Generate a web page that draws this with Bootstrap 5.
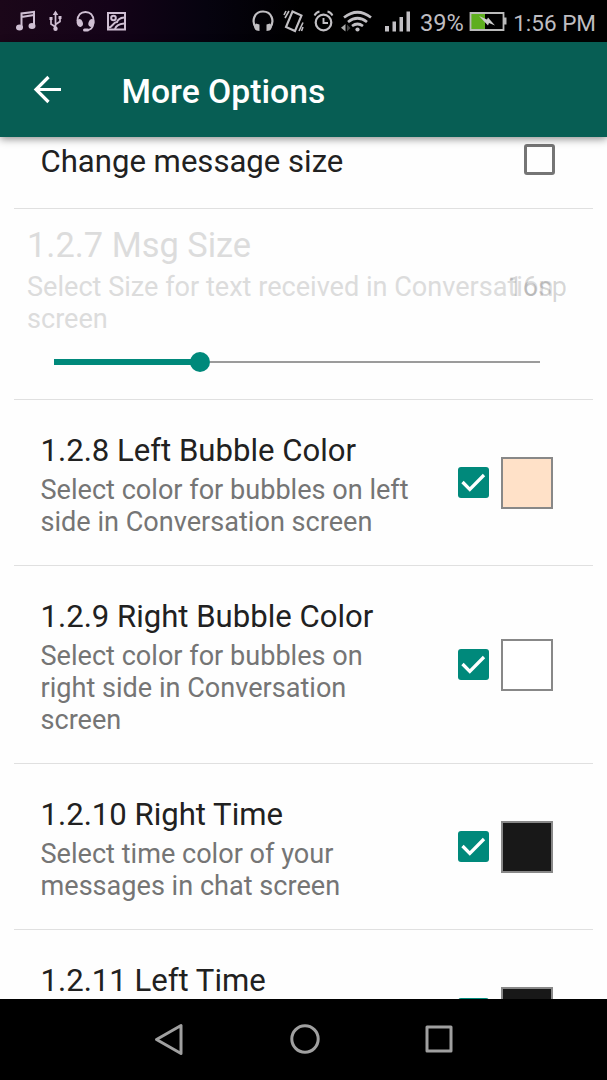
<!DOCTYPE html>
<html lang="en">
<head>
<meta charset="utf-8">
<meta name="viewport" content="width=device-width, initial-scale=1">
<title>More Options</title>
<link href="https://cdn.jsdelivr.net/npm/bootstrap@5.3.0/dist/css/bootstrap.min.css" rel="stylesheet">
<style>
  :root { --teal: #00897b; --appbar: #075e54; }
  body { font-family: Roboto, sans-serif; background: #fefefe; color: #212121; }
  .screen { height: 1080px; overflow: hidden; }
  .status-bar { height: 42px; padding: 0 11px 0 15px; color: #bfbdc1; background: linear-gradient(90deg, #1b0719 0, #140318 110px, #06030f 205px, #000 300px); }
  .status-bar svg { display: block; flex: none; }
  .status-text { line-height: 42px; padding-top: 3px; white-space: nowrap; }
  .battery-text { font-size: 23.6px; width: 48px; margin-left: 10px; }
  .clock-text { font-size: 22.5px; width: 89px; }
  .app-bar { height: 95px; background: var(--appbar); box-shadow: 0 2px 8px rgba(0,0,0,.45); z-index: 2; }
  .app-title { font-size: 33.7px; font-weight: 500; line-height: 40px; margin: 4px 0 0 58.500px; }
  .pref-list { min-height: 0; overflow: hidden; padding: 0 14px; }
  .pref-row { border-bottom: 1px solid #e0e0e0; padding: 0 40px 0 26.500px; flex: none; }
  .pref-title { font-size: 31.1px; line-height: 36px; white-space: nowrap; }
  .pref-summary { font-size: 27.1px; line-height: 32px; color: #757575; }
  .row-size { height: 72px; padding-right: 38px; padding-top: 7px; }
  .row-slider { height: 191px; padding: 16px 13px 0; }
  .row-slider .pref-title { font-size: 34.4px; line-height: 40px; }
  .row-slider .pref-title, .row-slider .pref-summary { color: #dcdcdc; }
  .row-slider .pref-summary { margin-top: 6px; white-space: nowrap; }
  .value-label { right: 26px; top: 62px; font-size: 27px; line-height: 32px; color: rgba(0,0,0,.17); }
  .slider-track { height: 20px; margin: 17px 40px 0 27px; }
  .slider-done { height: 6px; background: var(--teal); width: 30%; }
  .slider-thumb { width: 20px; height: 20px; background: var(--teal); margin-left: -10px; }
  .slider-rest { height: 2px; background: #9b9b9b; }
  .color-row { padding-top: 33px; padding-bottom: 27px; }
  .color-row .pref-summary { margin-top: 5px; }
  .controls { gap: 12px; margin-top: -6px; }
  .controls-cut { margin-top: 24px; }
  .empty-check { width: 31px; height: 31px; border: 3px solid #757575; border-radius: 3px; }
  .full-check { width: 31px; height: 31px; background: var(--teal); border-radius: 3px; }
  .swatch { width: 52px; height: 52px; border: 2px solid #888; }
  .peach { background: #ffe1c8; } .paper { background: #fff; } .ink { background: #181818; }
  .nav-keys { height: 81px; background: #000; padding: 0 154px 1px 153px; }
</style>
</head>
<body>
<main class="screen d-flex flex-column">
  <div class="status-bar d-flex align-items-center justify-content-between flex-shrink-0">
    <div class="d-flex">
      <svg width="112" height="42" fill="none" stroke="#cfbfd3" stroke-width="2">
        <g><path d="M6.500 28V13.500L19 12v14M6.500 17L19 15"/><ellipse cx="4.500" cy="27.500" rx="3.500" ry="3" fill="#cfbfd3" stroke="none"/><ellipse cx="17" cy="26" rx="3.500" ry="3" fill="#cfbfd3" stroke="none"/></g>
        <g stroke-width="1.700"><path d="M40.500 29V13M40.500 27l-4.500-3v-5M40.500 24.500l4.500-3V17"/><path d="M40.500 10.500l2.800 4.500h-5.600zM34.500 17h3v3h-3zM43.500 16h3v3h-3z" fill="#cfbfd3" stroke="none"/><circle cx="40.500" cy="28.800" r="2.200" fill="#cfbfd3" stroke="none"/></g>
        <g><path d="M62.500 21c0-6 3.500-9 8-9s8 3 8 9"/><path d="M78 24c0 4-3 6-6 6"/><ellipse cx="64.800" cy="23" rx="3" ry="4" transform="rotate(-18 64.800 23)" fill="#cfbfd3" stroke="none"/><ellipse cx="76.500" cy="23" rx="3" ry="4" transform="rotate(18 76.500 23)" fill="#cfbfd3" stroke="none"/><rect x="68" y="28.500" width="6" height="3" rx="1.500" fill="#cfbfd3" stroke="none"/></g>
        <g><path d="M93 13h17v16.500H93z"/><circle cx="98.500" cy="18" r="2.300"/><path d="M94 27.500c4-.5 4-5.500 8-5.500 1-3 3-4 7-4.500M100 29c1-3.500 4-5 9-5.500"/></g>
      </svg>
    </div>
    <div class="d-flex align-items-center">
      <svg width="160" height="42" viewBox="250 0 160 42" fill="none" stroke="#c1bfc3" stroke-width="2.200">
        <path d="M256.500 29c-6-8-2-17.500 6.500-17.500S275.500 21 269.500 29"/><path d="M256 23.500l3.500 1v6.500l-3-.5c-3-2-2.500-5-.5-7zM270 23.500l-3.500 1v6.500l3-.5c3-2 2.500-5 .5-7z" fill="#c1bfc3" stroke="none"/>
        <g stroke-width="2.100"><path d="M292.500 11.500l9 4-6.500 15.500-9-4z"/><path d="M289 11l-4 7M286 11l-2 4M303 22.500l-4 8.500M303 27l-1.500 4" stroke-width="1.600"/></g>
        <circle cx="323.500" cy="22.500" r="7.800"/><path d="M323.500 18v5h4.500M314.500 15.500c1-2 2.500-3.500 5-4M332.500 15.500c-1-2-2.500-3.500-5-4" stroke-width="1.900"/>
        <g stroke-width="2.700"><path d="M344 17.500q13.500-10.500 27 0M348 22q9.500-7.500 19 0M352 26q5.500-4 11 0"/></g><circle cx="357.500" cy="29.500" r="2.100" fill="#c1bfc3" stroke="none"/><path d="M345.500 24v7.500l-4.500-3.800z" fill="#aaa" stroke="none"/><path d="M347 24.500v7l3.500-3.500z" fill="#444" stroke="none"/>
        <path d="M385 26h4v5.500h-4zM392.500 21.500h3.500v10h-3.500zM399.500 17h3.500v14.500h-3.500zM406.500 11.500h3.500v20h-3.500z" fill="#c1bfc3" stroke="none"/>
      </svg>
      <span class="status-text battery-text">39%</span>
      <svg width="39" height="42"><path d="M3 14h14v15H3z" fill="#5eae1e"/><path d="M2.500 13h33v17h-33z" fill="none" stroke="#bbb" stroke-width="1.800"/><path d="M36 17.500h2.500v7H36z" fill="#bbb"/><path d="M11 16l8 3.500 1-2 7 8-6-2.500-1 2.500z" fill="#ccc"/></svg>
      <span class="status-text clock-text text-end">1:56 PM</span>
    </div>
  </div>

  <header class="app-bar d-flex align-items-center position-relative text-white flex-shrink-0">
    <svg class="flex-shrink-0" width="63" height="95" fill="none" stroke="#fff" stroke-width="3.200"><path d="M61 47.500H36M48.500 35L36 47.500 48.500 60"/></svg>
    <h1 class="app-title">More Options</h1>
  </header>

  <section class="pref-list flex-grow-1 d-flex flex-column">
    <div class="pref-row row-size d-flex justify-content-between">
      <div class="pref-title">Change message size</div>
      <div class="empty-check"></div>
    </div>

    <div class="pref-row row-slider position-relative">
      <div class="pref-title">1.2.7 Msg Size</div>
      <div class="pref-summary">Select Size for text received in Conversation<br>screen</div>
      <div class="value-label position-absolute">16sp</div>
      <div class="slider-track d-flex align-items-center">
        <div class="slider-done"></div>
        <div class="slider-thumb rounded-circle flex-shrink-0"></div>
        <div class="slider-rest flex-grow-1"></div>
      </div>
    </div>

    <div class="pref-row color-row d-flex justify-content-between align-items-start">
      <div><div class="pref-title">1.2.8 Left Bubble Color</div>
      <div class="pref-summary">Select color for bubbles on left<br>side in Conversation screen</div></div>
      <div class="d-flex align-items-center align-self-center controls">
        <div class="full-check"><svg class="d-block" width="31" height="31" fill="none" stroke="#fff" stroke-width="3.300"><path d="M4.500 15l7.300 7.300L26 8"/></svg></div>
        <div class="swatch peach"></div>
      </div>
    </div>

    <div class="pref-row color-row d-flex justify-content-between align-items-start">
      <div><div class="pref-title">1.2.9 Right Bubble Color</div>
      <div class="pref-summary">Select color for bubbles on<br>right side in Conversation<br>screen</div></div>
      <div class="d-flex align-items-center align-self-center controls">
        <div class="full-check"><svg class="d-block" width="31" height="31" fill="none" stroke="#fff" stroke-width="3.300"><path d="M4.500 15l7.300 7.300L26 8"/></svg></div>
        <div class="swatch paper"></div>
      </div>
    </div>

    <div class="pref-row color-row d-flex justify-content-between align-items-start">
      <div><div class="pref-title">1.2.10 Right Time</div>
      <div class="pref-summary">Select time color of your<br>messages in chat screen</div></div>
      <div class="d-flex align-items-center align-self-center controls">
        <div class="full-check"><svg class="d-block" width="31" height="31" fill="none" stroke="#fff" stroke-width="3.300"><path d="M4.500 15l7.300 7.300L26 8"/></svg></div>
        <div class="swatch ink"></div>
      </div>
    </div>

    <div class="pref-row color-row d-flex justify-content-between align-items-start">
      <div class="pref-title">1.2.11 Left Time</div>
      <div class="d-flex align-items-center controls controls-cut">
        <div class="full-check"></div>
        <div class="swatch ink"></div>
      </div>
    </div>
  </section>

  <nav class="nav-keys d-flex align-items-center justify-content-between flex-shrink-0">
    <svg width="32" height="34" fill="none" stroke="#a0a0a0" stroke-width="3" stroke-linejoin="round"><path d="M28 3.500v28L3.500 17.500z"/></svg>
    <svg width="32" height="32" fill="none" stroke="#a0a0a0" stroke-width="3"><circle cx="16" cy="16" r="13.200"/></svg>
    <svg width="28" height="28" fill="none" stroke="#a0a0a0" stroke-width="3" stroke-linejoin="round"><path d="M2 2h24v24H2z"/></svg>
  </nav>
</main>
<script src="https://cdn.jsdelivr.net/npm/bootstrap@5.3.0/dist/js/bootstrap.bundle.min.js"></script>
</body>
</html>
